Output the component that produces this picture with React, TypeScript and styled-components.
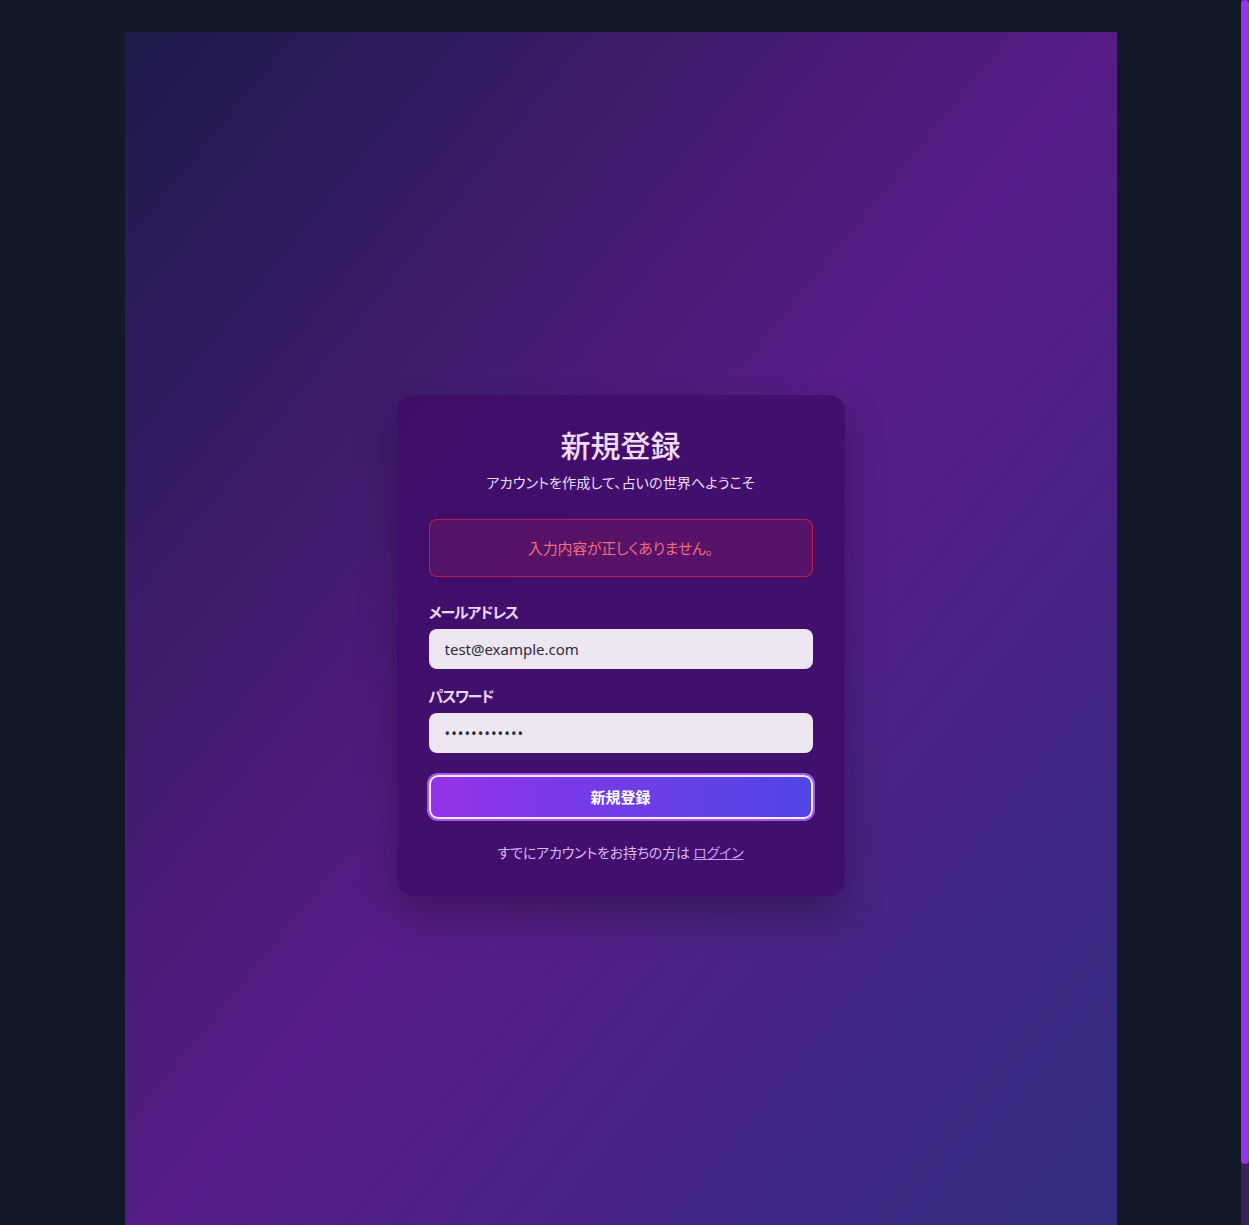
import React, { useState } from 'react';
import styled, { createGlobalStyle } from 'styled-components';

const GlobalStyle = createGlobalStyle`
  html, body {
    margin: 0;
    padding: 0;
    background: #111827;
    font-family: "Noto Sans", "Noto Sans CJK JP", sans-serif;
    font-feature-settings: "palt";
  }
  body {
    padding-right: 8px;
  }
  ::-webkit-scrollbar {
    width: 0;
  }
`;

// window scrollbar as drawn in the screenshot
const StyledScrollTrack = styled.div`
  position: fixed;
  top: 0;
  right: 0;
  width: 8px;
  height: 100vh;
  background: #3b1f62;
  z-index: 10;
`;

const StyledScrollThumb = styled.div`
  width: 8px;
  height: 95%;
  border-radius: 4px;
  background: #9333ea;
`;

const StyledPage = styled.div`
  max-width: 992px;
  margin: 0 auto;
  padding: 32px 0;
`;

const StyledPanel = styled.main`
  min-height: 1226px;
  background: linear-gradient(to bottom right, #1e1b4b, #581c87, #312e81);
  display: flex;
  align-items: center;
  justify-content: center;
`;

const StyledCard = styled.section`
  width: 448px;
  box-sizing: border-box;
  padding: 32px;
  border-radius: 16px;
  background: rgba(62, 12, 104, 0.82);
  box-shadow: 0 20px 40px rgba(0, 0, 0, 0.28);
`;

const StyledHeader = styled.header`
  text-align: center;
  margin-bottom: 25px;
  h1 {
    margin: 0;
    font-size: 30px;
    line-height: 38px;
    font-weight: 500;
    color: #f3dcf6;
  }
  p {
    margin: 7px 0 0;
    font-size: 14.2px;
    line-height: 22px;
    color: #ecdcfb;
  }
`;

const StyledError = styled.div`
  height: 58px;
  box-sizing: border-box;
  display: flex;
  align-items: center;
  justify-content: center;
  border: 1px solid rgba(220, 38, 70, 0.7);
  border-radius: 8px;
  background: rgba(127, 29, 96, 0.35);
  color: #f06b7b;
  font-size: 15px;
  letter-spacing: -0.3px;
  margin-bottom: 24px;
`;

const StyledField = styled.div`
  margin-bottom: 16px;
  label {
    display: block;
    font-size: 15px;
    font-weight: 700;
    line-height: 22px;
    letter-spacing: -1.2px;
    color: #ead8fb;
    margin-bottom: 6px;
  }
`;

const StyledInput = styled.input<{ $secret?: boolean }>`
  display: block;
  width: 100%;
  box-sizing: border-box;
  height: 40px;
  padding: 0 16px;
  border: none;
  border-radius: 8px;
  background: #ece6f1;
  color: #2d2d3a;
  font-family: "Noto Sans", "Noto Sans CJK JP", sans-serif;
  font-size: 15px;
  letter-spacing: ${({ $secret }) => ($secret ? '1px' : '0')};
  outline: none;
`;

const StyledButton = styled.button`
  display: block;
  width: 100%;
  height: 44px;
  margin-top: 22px;
  border: 2px solid #f5ecff;
  border-radius: 9px;
  background: linear-gradient(to right, #9333ea, #4f46e5);
  box-shadow: 0 0 0 2px #a855f7;
  color: #ffffff;
  font-family: "Noto Sans", "Noto Sans CJK JP", sans-serif;
  font-feature-settings: "palt";
  font-size: 15px;
  font-weight: 700;
  cursor: pointer;
`;

const StyledFooter = styled.p`
  margin: 23px 0 0;
  text-align: center;
  font-size: 14px;
  line-height: 22px;
  letter-spacing: -0.2px;
  color: #d9b9f5;
  a {
    color: #c89cf8;
    text-decoration: underline;
  }
`;

const App = () => {
  const [email, setEmail] = useState('test@example.com');
  const [password, setPassword] = useState('password1234');

  return (
    <>
      <GlobalStyle />
      <StyledScrollTrack>
        <StyledScrollThumb />
      </StyledScrollTrack>
      <StyledPage>
        <StyledPanel>
          <StyledCard>
            <StyledHeader>
              <h1>新規登録</h1>
              <p>アカウントを作成して、占いの世界へようこそ</p>
            </StyledHeader>
            <StyledError>入力内容が正しくありません。</StyledError>
            <form onSubmit={(e) => e.preventDefault()}>
              <StyledField>
                <label htmlFor="email">メールアドレス</label>
                <StyledInput id="email" type="email" value={email} onChange={(e) => setEmail(e.target.value)} />
              </StyledField>
              <StyledField>
                <label htmlFor="password">パスワード</label>
                <StyledInput
                  id="password"
                  type="password"
                  $secret
                  value={password}
                  onChange={(e) => setPassword(e.target.value)}
                />
              </StyledField>
              <StyledButton type="submit">新規登録</StyledButton>
            </form>
            <StyledFooter>
              すでにアカウントをお持ちの方は <a href="#login">ログイン</a>
            </StyledFooter>
          </StyledCard>
        </StyledPanel>
      </StyledPage>
    </>
  );
};

export default App;
